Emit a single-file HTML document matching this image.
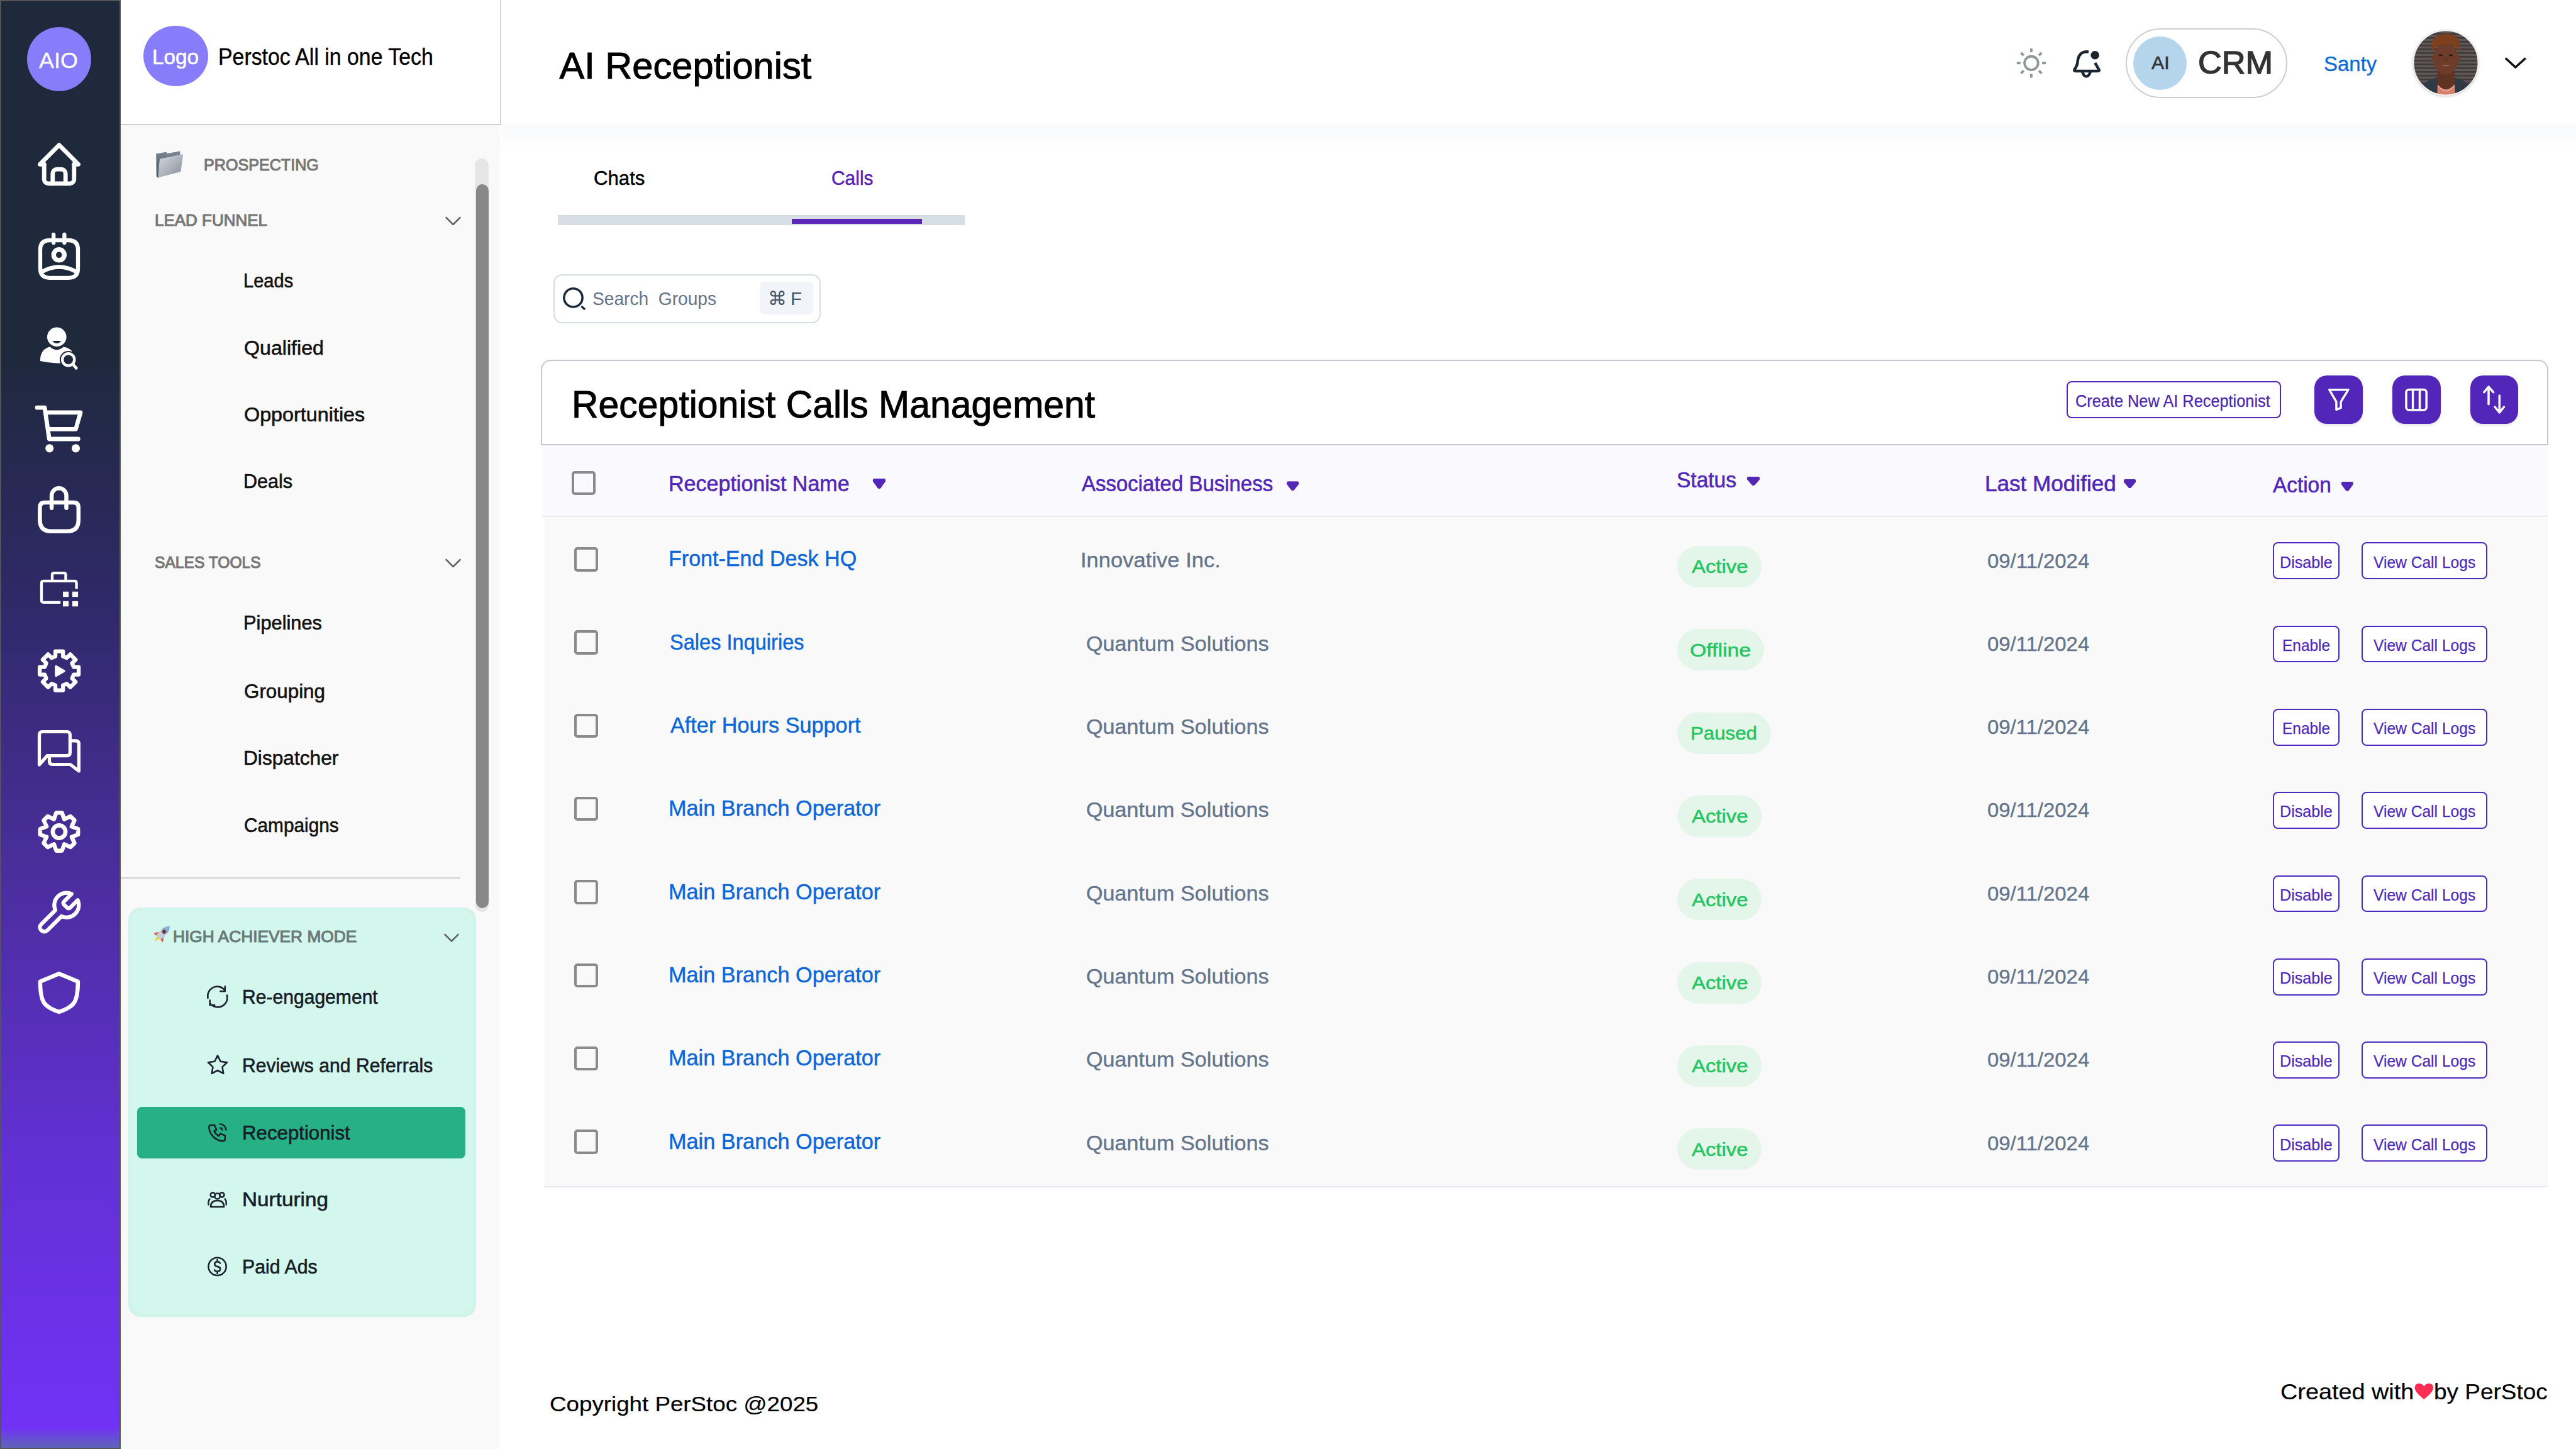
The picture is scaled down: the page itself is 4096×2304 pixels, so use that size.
<!DOCTYPE html>
<html><head><meta charset="utf-8"><title>AI Receptionist</title>
<style>
html,body{margin:0;padding:0;}
body{width:4096px;height:2304px;position:relative;overflow:hidden;background:#fff;font-family:"Liberation Sans",sans-serif;}
body>div,body>span{position:absolute;}
.t{white-space:pre;line-height:1;}
svg{position:absolute;left:0;top:0;}
</style></head><body>
<div style="left:0.0px;top:0.0px;width:192.0px;height:2304.0px;box-sizing:border-box;border:2px solid #555;background:linear-gradient(180deg,#1e293b 0%,#1e293b 24%,#30296a 42%,#4a2e9c 60%,#6230d4 80%,#7132f5 98.6%,#5d66b8 100%);"></div>
<div style="left:192.0px;top:0.0px;width:603.0px;height:2304.0px;background:#f9f9f9;"></div>
<div style="left:192.0px;top:0.0px;width:605.0px;height:199.0px;box-sizing:border-box;background:#fff;border-right:2px solid #d6d6d6;border-bottom:2px solid #d0d0d0;"></div>
<div style="left:797.0px;top:197.0px;width:3299.0px;height:45.0px;background:linear-gradient(180deg,#f9fafd,#ffffff);"></div>
<div style="left:797.0px;top:0.0px;width:3299.0px;height:197.0px;background:#fff;"></div>
<div style="left:43.0px;top:43.0px;width:102.0px;height:102.0px;border-radius:50%;background:#877cf9;"></div>
<span class="t" style="left:61.9px;top:78.5px;font-size:34.22px;color:#fff;transform:scaleX(1.0484);transform-origin:0 0;-webkit-text-stroke:0.3px #fff;">AIO</span>
<div style="left:228.3px;top:40.7px;width:102.4px;height:96.4px;border-radius:50%;background:#877cf9;"></div>
<span class="t" style="left:242.2px;top:74.3px;font-size:33.94px;color:#fff;transform:scaleX(0.9822);transform-origin:0 0;-webkit-text-stroke:0.6px #fff;">Logo</span>
<span class="t" style="left:347.2px;top:73.0px;font-size:36.31px;color:#000;transform:scaleX(0.9325);transform-origin:0 0;-webkit-text-stroke:0.4px #000;">Perstoc All in one Tech</span>
<div style="left:755.0px;top:252.0px;width:22.0px;height:1198.0px;border-radius:11px;background:#e6e6e6;"></div>
<div style="left:757.0px;top:293.0px;width:20.0px;height:1151.0px;border-radius:10px;background:#888;"></div>
<span class="t" style="left:324.2px;top:249.0px;font-size:26.12px;color:#777;transform:scaleX(0.9621);transform-origin:0 0;-webkit-text-stroke:1.1px #777;">PROSPECTING</span>
<span class="t" style="left:245.5px;top:336.7px;font-size:26.12px;color:#777;transform:scaleX(0.9947);transform-origin:0 0;-webkit-text-stroke:1.1px #777;">LEAD FUNNEL</span>
<span class="t" style="left:245.7px;top:880.8px;font-size:26.12px;color:#777;transform:scaleX(0.9424);transform-origin:0 0;-webkit-text-stroke:1.1px #777;">SALES TOOLS</span>
<span class="t" style="left:386.8px;top:430.9px;font-size:31.28px;color:#111;transform:scaleX(0.9292);transform-origin:0 0;-webkit-text-stroke:0.6px #111;">Leads</span>
<span class="t" style="left:387.7px;top:537.7px;font-size:31.28px;color:#111;transform:scaleX(1.0285);transform-origin:0 0;-webkit-text-stroke:0.6px #111;">Qualified</span>
<span class="t" style="left:387.7px;top:644.0px;font-size:31.28px;color:#111;transform:scaleX(1.0339);transform-origin:0 0;-webkit-text-stroke:0.6px #111;">Opportunities</span>
<span class="t" style="left:386.7px;top:750.0px;font-size:31.28px;color:#111;transform:scaleX(0.9773);transform-origin:0 0;-webkit-text-stroke:0.6px #111;">Deals</span>
<span class="t" style="left:386.7px;top:975.0px;font-size:31.28px;color:#111;transform:scaleX(0.9849);transform-origin:0 0;-webkit-text-stroke:0.6px #111;">Pipelines</span>
<span class="t" style="left:387.6px;top:1084.0px;font-size:31.28px;color:#111;transform:scaleX(1.0029);transform-origin:0 0;-webkit-text-stroke:0.6px #111;">Grouping</span>
<span class="t" style="left:386.6px;top:1190.3px;font-size:31.28px;color:#111;transform:scaleX(1.0123);transform-origin:0 0;-webkit-text-stroke:0.6px #111;">Dispatcher</span>
<span class="t" style="left:387.7px;top:1297.0px;font-size:31.28px;color:#111;transform:scaleX(0.9533);transform-origin:0 0;-webkit-text-stroke:0.6px #111;">Campaigns</span>
<div style="left:192.0px;top:1395.0px;width:540.0px;height:2.0px;background:#cfcfcf;"></div>
<div style="left:204.0px;top:1443.0px;width:553.0px;height:651.0px;border-radius:20px;background:#d4f7ed;box-shadow:inset 0 0 8px rgba(0,90,60,0.06);"></div>
<div style="left:218.0px;top:1760.0px;width:522.0px;height:82.0px;border-radius:8px;background:#27b084;"></div>
<span class="t" style="left:275.0px;top:1476.0px;font-size:25.98px;color:#6b7b77;transform:scaleX(1.0129);transform-origin:0 0;-webkit-text-stroke:1.1px #6b7b77;">HIGH ACHIEVER MODE</span>
<span class="t" style="left:385.0px;top:1570.0px;font-size:31.01px;color:#161d28;transform:scaleX(0.9704);transform-origin:0 0;-webkit-text-stroke:0.6px #161d28;">Re-engagement</span>
<span class="t" style="left:385.0px;top:1678.7px;font-size:31.01px;color:#161d28;transform:scaleX(0.9725);transform-origin:0 0;-webkit-text-stroke:0.6px #161d28;">Reviews and Referrals</span>
<span class="t" style="left:384.9px;top:1785.6px;font-size:31.01px;color:#161d28;transform:scaleX(1.0070);transform-origin:0 0;-webkit-text-stroke:0.6px #161d28;">Receptionist</span>
<span class="t" style="left:384.8px;top:1891.9px;font-size:31.01px;color:#161d28;transform:scaleX(1.0747);transform-origin:0 0;-webkit-text-stroke:0.6px #161d28;">Nurturing</span>
<span class="t" style="left:385.0px;top:1998.7px;font-size:31.01px;color:#161d28;transform:scaleX(0.9777);transform-origin:0 0;-webkit-text-stroke:0.6px #161d28;">Paid Ads</span>
<span class="t" style="left:889.4px;top:75.4px;font-size:59.64px;color:#000;-webkit-text-stroke:1.0px #000;">AI Receptionist</span>
<div style="left:3380.0px;top:45.0px;width:257.0px;height:111.0px;box-sizing:border-box;border:2px solid #cfcfcf;border-radius:56px;background:#fff;"></div>
<div style="left:3392.0px;top:58.0px;width:85.0px;height:85.0px;border-radius:50%;background:#b4d5ec;"></div>
<span class="t" style="left:3420.8px;top:85.8px;font-size:29.19px;color:#333;transform:scaleX(1.0358);transform-origin:0 0;-webkit-text-stroke:0.6px #333;">AI</span>
<span class="t" style="left:3495.4px;top:75.2px;font-size:49.44px;color:#333;transform:scaleX(1.0570);transform-origin:0 0;-webkit-text-stroke:1.4px #333;">CRM</span>
<span class="t" style="left:3694.5px;top:84.5px;font-size:33.24px;color:#0b6bd6;transform:scaleX(0.9912);transform-origin:0 0;-webkit-text-stroke:0.3px #0b6bd6;">Santy</span>
<div style="left:3837.0px;top:48.0px;width:104.0px;height:104.0px;border-radius:50%;background:radial-gradient(circle at 50% 45%,#6b4a3a 0%,#4a3a33 35%,#5a5450 60%,#3d3835 100%);box-shadow:0 1px 4px rgba(0,0,0,0.25);"></div>
<span class="t" style="left:944.0px;top:267.9px;font-size:31.15px;color:#000;-webkit-text-stroke:0.5px #000;">Chats</span>
<span class="t" style="left:1321.5px;top:267.9px;font-size:31.15px;color:#5b21b6;transform:scaleX(0.9614);transform-origin:0 0;-webkit-text-stroke:0.5px #5b21b6;">Calls</span>
<div style="left:887.0px;top:341.5px;width:647.0px;height:16.5px;background:#d8dee6;"></div>
<div style="left:1258.6px;top:347.7px;width:207.4px;height:8.3px;background:#5b27b8;"></div>
<div style="left:880.0px;top:436.0px;width:425.0px;height:78.0px;box-sizing:border-box;border:2px solid #d5dde6;border-radius:14px;background:#fff;"></div>
<div style="left:1208.0px;top:448.0px;width:85.0px;height:52.0px;border-radius:8px;background:#f1f5f9;"></div>
<span class="t" style="left:942.4px;top:460.0px;font-size:29.75px;color:#64748b;transform:scaleX(0.9459);transform-origin:0 0;white-space:pre;">Search  Groups</span>
<span class="t" style="left:1221.0px;top:460.0px;font-size:29.75px;color:#475569;">⌘</span>
<span class="t" style="left:1257.0px;top:460.0px;font-size:29.75px;color:#475569;">F</span>
<div style="left:860.0px;top:572.0px;width:3191.5px;height:136.0px;box-sizing:border-box;border:2px solid #c6c6ce;border-bottom:2px solid #c6c6ce;border-radius:16px 16px 0 0;background:#fff;"></div>
<div style="left:862.0px;top:708.0px;width:3189.0px;height:114.0px;box-sizing:border-box;background:#f9f9fe;border-bottom:2px solid #e8ebf0;"></div>
<div style="left:866.0px;top:822.0px;width:3185.0px;height:1066.0px;box-sizing:border-box;background:#f9f9fa;border-bottom:2px solid #e5e8ee;"></div>
<span class="t" style="left:909.1px;top:612.0px;font-size:61.45px;color:#000;transform:scaleX(0.9594);transform-origin:0 0;-webkit-text-stroke:1.0px #000;">Receptionist Calls Management</span>
<div style="left:3285.5px;top:606.0px;width:341.0px;height:59.0px;box-sizing:border-box;border:2px solid #5427b8;border-radius:8px;background:#fff;"></div>
<span class="t" style="left:3300.3px;top:624.0px;font-size:27.93px;color:#4a25b0;transform:scaleX(0.9072);transform-origin:0 0;-webkit-text-stroke:0.25px #4a25b0;">Create New AI Receptionist</span>
<div style="left:3680.0px;top:597.0px;width:76.5px;height:76.5px;border-radius:20px;background:#5126b8;box-shadow:0 2px 4px rgba(0,0,0,0.12);"></div>
<div style="left:3804.0px;top:597.0px;width:76.5px;height:76.5px;border-radius:20px;background:#5126b8;box-shadow:0 2px 4px rgba(0,0,0,0.12);"></div>
<div style="left:3927.5px;top:597.0px;width:76.5px;height:76.5px;border-radius:20px;background:#5126b8;box-shadow:0 2px 4px rgba(0,0,0,0.12);"></div>
<div style="left:909.0px;top:749.0px;width:38.0px;height:38.0px;box-sizing:border-box;border:4px solid #8a8a8a;border-radius:5px;"></div>
<span class="t" style="left:1062.6px;top:751.3px;font-size:35.34px;color:#5227b8;transform:scaleX(0.9637);transform-origin:0 0;-webkit-text-stroke:0.6px #5227b8;">Receptionist Name</span>
<span class="t" style="left:1719.9px;top:751.0px;font-size:35.34px;color:#5227b8;transform:scaleX(0.9331);transform-origin:0 0;-webkit-text-stroke:0.6px #5227b8;">Associated Business</span>
<span class="t" style="left:2666.2px;top:745.5px;font-size:34.64px;color:#5227b8;transform:scaleX(0.9673);transform-origin:0 0;-webkit-text-stroke:0.6px #5227b8;">Status</span>
<span class="t" style="left:3155.8px;top:751.0px;font-size:35.34px;color:#5227b8;transform:scaleX(0.9935);transform-origin:0 0;-webkit-text-stroke:0.6px #5227b8;">Last Modified</span>
<span class="t" style="left:3614.4px;top:754.3px;font-size:34.36px;color:#5227b8;transform:scaleX(0.9711);transform-origin:0 0;-webkit-text-stroke:0.6px #5227b8;">Action</span>
<div style="left:913.0px;top:870.0px;width:38.3px;height:38.5px;box-sizing:border-box;border:4px solid #8a8a8a;border-radius:5px;"></div>
<span class="t" style="left:1063.2px;top:871.4px;font-size:34.92px;color:#0b66d8;transform:scaleX(0.9761);transform-origin:0 0;-webkit-text-stroke:0.45px #0b66d8;">Front-End Desk HQ</span>
<span class="t" style="left:1717.8px;top:873.4px;font-size:34.08px;color:#64748b;transform:scaleX(1.0145);transform-origin:0 0;-webkit-text-stroke:0.35px #64748b;">Innovative Inc.</span>
<div style="left:2667.0px;top:868.0px;width:134.3px;height:66.0px;border-radius:33px;background:#e4f5ea;"></div>
<span class="t" style="left:2689.9px;top:886.4px;font-size:30.17px;color:#22c55e;transform:scaleX(1.0895);transform-origin:0 0;-webkit-text-stroke:0.5px #22c55e;">Active</span>
<span class="t" style="left:3159.7px;top:876.5px;font-size:30.45px;color:#64748b;transform:scaleX(1.0807);transform-origin:0 0;-webkit-text-stroke:0.35px #64748b;">09/11/2024</span>
<div style="left:3614.2px;top:862.3px;width:106.0px;height:58.9px;box-sizing:border-box;border:2px solid #4c2ac0;border-radius:8px;background:#fff;"></div>
<span class="t" style="left:3625.3px;top:880.5px;font-size:25.98px;color:#4c2ac0;transform:scaleX(0.9666);transform-origin:0 0;-webkit-text-stroke:0.25px #4c2ac0;">Disable</span>
<div style="left:3755.2px;top:862.3px;width:199.6px;height:58.9px;box-sizing:border-box;border:2px solid #4c2ac0;border-radius:8px;background:#fff;"></div>
<span class="t" style="left:3773.9px;top:880.5px;font-size:25.98px;color:#4c2ac0;transform:scaleX(0.9469);transform-origin:0 0;-webkit-text-stroke:0.25px #4c2ac0;">View Call Logs</span>
<div style="left:913.0px;top:1002.3px;width:38.3px;height:38.5px;box-sizing:border-box;border:4px solid #8a8a8a;border-radius:5px;"></div>
<span class="t" style="left:1064.5px;top:1003.8px;font-size:34.92px;color:#0b66d8;transform:scaleX(0.9326);transform-origin:0 0;-webkit-text-stroke:0.45px #0b66d8;">Sales Inquiries</span>
<span class="t" style="left:1727.3px;top:1005.7px;font-size:34.08px;color:#64748b;transform:scaleX(1.0027);transform-origin:0 0;-webkit-text-stroke:0.35px #64748b;">Quantum Solutions</span>
<div style="left:2666.5px;top:1000.3px;width:138.3px;height:66.0px;border-radius:33px;background:#e4f5ea;"></div>
<span class="t" style="left:2687.2px;top:1018.7px;font-size:30.17px;color:#22c55e;transform:scaleX(1.1220);transform-origin:0 0;-webkit-text-stroke:0.5px #22c55e;">Offline</span>
<span class="t" style="left:3159.7px;top:1008.8px;font-size:30.45px;color:#64748b;transform:scaleX(1.0807);transform-origin:0 0;-webkit-text-stroke:0.35px #64748b;">09/11/2024</span>
<div style="left:3614.2px;top:994.6px;width:106.0px;height:58.9px;box-sizing:border-box;border:2px solid #4c2ac0;border-radius:8px;background:#fff;"></div>
<span class="t" style="left:3629.0px;top:1012.8px;font-size:25.98px;color:#4c2ac0;transform:scaleX(0.9406);transform-origin:0 0;-webkit-text-stroke:0.25px #4c2ac0;">Enable</span>
<div style="left:3755.2px;top:994.6px;width:199.6px;height:58.9px;box-sizing:border-box;border:2px solid #4c2ac0;border-radius:8px;background:#fff;"></div>
<span class="t" style="left:3773.9px;top:1012.8px;font-size:25.98px;color:#4c2ac0;transform:scaleX(0.9469);transform-origin:0 0;-webkit-text-stroke:0.25px #4c2ac0;">View Call Logs</span>
<div style="left:913.0px;top:1134.6px;width:38.3px;height:38.5px;box-sizing:border-box;border:4px solid #8a8a8a;border-radius:5px;"></div>
<span class="t" style="left:1065.9px;top:1136.1px;font-size:34.92px;color:#0b66d8;transform:scaleX(0.9808);transform-origin:0 0;-webkit-text-stroke:0.45px #0b66d8;">After Hours Support</span>
<span class="t" style="left:1727.3px;top:1138.0px;font-size:34.08px;color:#64748b;transform:scaleX(1.0027);transform-origin:0 0;-webkit-text-stroke:0.35px #64748b;">Quantum Solutions</span>
<div style="left:2666.9px;top:1132.6px;width:149.2px;height:66.0px;border-radius:33px;background:#e4f5ea;"></div>
<span class="t" style="left:2688.2px;top:1151.0px;font-size:30.17px;color:#22c55e;transform:scaleX(1.0348);transform-origin:0 0;-webkit-text-stroke:0.5px #22c55e;">Paused</span>
<span class="t" style="left:3159.7px;top:1141.1px;font-size:30.45px;color:#64748b;transform:scaleX(1.0807);transform-origin:0 0;-webkit-text-stroke:0.35px #64748b;">09/11/2024</span>
<div style="left:3614.2px;top:1126.9px;width:106.0px;height:58.9px;box-sizing:border-box;border:2px solid #4c2ac0;border-radius:8px;background:#fff;"></div>
<span class="t" style="left:3629.0px;top:1145.1px;font-size:25.98px;color:#4c2ac0;transform:scaleX(0.9406);transform-origin:0 0;-webkit-text-stroke:0.25px #4c2ac0;">Enable</span>
<div style="left:3755.2px;top:1126.9px;width:199.6px;height:58.9px;box-sizing:border-box;border:2px solid #4c2ac0;border-radius:8px;background:#fff;"></div>
<span class="t" style="left:3773.9px;top:1145.1px;font-size:25.98px;color:#4c2ac0;transform:scaleX(0.9469);transform-origin:0 0;-webkit-text-stroke:0.25px #4c2ac0;">View Call Logs</span>
<div style="left:913.0px;top:1266.9px;width:38.3px;height:38.5px;box-sizing:border-box;border:4px solid #8a8a8a;border-radius:5px;"></div>
<span class="t" style="left:1063.2px;top:1268.4px;font-size:34.92px;color:#0b66d8;transform:scaleX(0.9821);transform-origin:0 0;-webkit-text-stroke:0.45px #0b66d8;">Main Branch Operator</span>
<span class="t" style="left:1727.3px;top:1270.3px;font-size:34.08px;color:#64748b;transform:scaleX(1.0027);transform-origin:0 0;-webkit-text-stroke:0.35px #64748b;">Quantum Solutions</span>
<div style="left:2667.0px;top:1264.9px;width:134.3px;height:66.0px;border-radius:33px;background:#e4f5ea;"></div>
<span class="t" style="left:2689.9px;top:1283.3px;font-size:30.17px;color:#22c55e;transform:scaleX(1.0895);transform-origin:0 0;-webkit-text-stroke:0.5px #22c55e;">Active</span>
<span class="t" style="left:3159.7px;top:1273.4px;font-size:30.45px;color:#64748b;transform:scaleX(1.0807);transform-origin:0 0;-webkit-text-stroke:0.35px #64748b;">09/11/2024</span>
<div style="left:3614.2px;top:1259.2px;width:106.0px;height:58.9px;box-sizing:border-box;border:2px solid #4c2ac0;border-radius:8px;background:#fff;"></div>
<span class="t" style="left:3625.3px;top:1277.4px;font-size:25.98px;color:#4c2ac0;transform:scaleX(0.9666);transform-origin:0 0;-webkit-text-stroke:0.25px #4c2ac0;">Disable</span>
<div style="left:3755.2px;top:1259.2px;width:199.6px;height:58.9px;box-sizing:border-box;border:2px solid #4c2ac0;border-radius:8px;background:#fff;"></div>
<span class="t" style="left:3773.9px;top:1277.4px;font-size:25.98px;color:#4c2ac0;transform:scaleX(0.9469);transform-origin:0 0;-webkit-text-stroke:0.25px #4c2ac0;">View Call Logs</span>
<div style="left:913.0px;top:1399.2px;width:38.3px;height:38.5px;box-sizing:border-box;border:4px solid #8a8a8a;border-radius:5px;"></div>
<span class="t" style="left:1063.2px;top:1400.6px;font-size:34.92px;color:#0b66d8;transform:scaleX(0.9821);transform-origin:0 0;-webkit-text-stroke:0.45px #0b66d8;">Main Branch Operator</span>
<span class="t" style="left:1727.3px;top:1402.6px;font-size:34.08px;color:#64748b;transform:scaleX(1.0027);transform-origin:0 0;-webkit-text-stroke:0.35px #64748b;">Quantum Solutions</span>
<div style="left:2667.0px;top:1397.2px;width:134.3px;height:66.0px;border-radius:33px;background:#e4f5ea;"></div>
<span class="t" style="left:2689.9px;top:1415.6px;font-size:30.17px;color:#22c55e;transform:scaleX(1.0895);transform-origin:0 0;-webkit-text-stroke:0.5px #22c55e;">Active</span>
<span class="t" style="left:3159.7px;top:1405.7px;font-size:30.45px;color:#64748b;transform:scaleX(1.0807);transform-origin:0 0;-webkit-text-stroke:0.35px #64748b;">09/11/2024</span>
<div style="left:3614.2px;top:1391.5px;width:106.0px;height:58.9px;box-sizing:border-box;border:2px solid #4c2ac0;border-radius:8px;background:#fff;"></div>
<span class="t" style="left:3625.3px;top:1409.7px;font-size:25.98px;color:#4c2ac0;transform:scaleX(0.9666);transform-origin:0 0;-webkit-text-stroke:0.25px #4c2ac0;">Disable</span>
<div style="left:3755.2px;top:1391.5px;width:199.6px;height:58.9px;box-sizing:border-box;border:2px solid #4c2ac0;border-radius:8px;background:#fff;"></div>
<span class="t" style="left:3773.9px;top:1409.7px;font-size:25.98px;color:#4c2ac0;transform:scaleX(0.9469);transform-origin:0 0;-webkit-text-stroke:0.25px #4c2ac0;">View Call Logs</span>
<div style="left:913.0px;top:1531.5px;width:38.3px;height:38.5px;box-sizing:border-box;border:4px solid #8a8a8a;border-radius:5px;"></div>
<span class="t" style="left:1063.2px;top:1532.9px;font-size:34.92px;color:#0b66d8;transform:scaleX(0.9821);transform-origin:0 0;-webkit-text-stroke:0.45px #0b66d8;">Main Branch Operator</span>
<span class="t" style="left:1727.3px;top:1534.9px;font-size:34.08px;color:#64748b;transform:scaleX(1.0027);transform-origin:0 0;-webkit-text-stroke:0.35px #64748b;">Quantum Solutions</span>
<div style="left:2667.0px;top:1529.5px;width:134.3px;height:66.0px;border-radius:33px;background:#e4f5ea;"></div>
<span class="t" style="left:2689.9px;top:1547.9px;font-size:30.17px;color:#22c55e;transform:scaleX(1.0895);transform-origin:0 0;-webkit-text-stroke:0.5px #22c55e;">Active</span>
<span class="t" style="left:3159.7px;top:1538.0px;font-size:30.45px;color:#64748b;transform:scaleX(1.0807);transform-origin:0 0;-webkit-text-stroke:0.35px #64748b;">09/11/2024</span>
<div style="left:3614.2px;top:1523.8px;width:106.0px;height:58.9px;box-sizing:border-box;border:2px solid #4c2ac0;border-radius:8px;background:#fff;"></div>
<span class="t" style="left:3625.3px;top:1542.0px;font-size:25.98px;color:#4c2ac0;transform:scaleX(0.9666);transform-origin:0 0;-webkit-text-stroke:0.25px #4c2ac0;">Disable</span>
<div style="left:3755.2px;top:1523.8px;width:199.6px;height:58.9px;box-sizing:border-box;border:2px solid #4c2ac0;border-radius:8px;background:#fff;"></div>
<span class="t" style="left:3773.9px;top:1542.0px;font-size:25.98px;color:#4c2ac0;transform:scaleX(0.9469);transform-origin:0 0;-webkit-text-stroke:0.25px #4c2ac0;">View Call Logs</span>
<div style="left:913.0px;top:1663.8px;width:38.3px;height:38.5px;box-sizing:border-box;border:4px solid #8a8a8a;border-radius:5px;"></div>
<span class="t" style="left:1063.2px;top:1665.3px;font-size:34.92px;color:#0b66d8;transform:scaleX(0.9821);transform-origin:0 0;-webkit-text-stroke:0.45px #0b66d8;">Main Branch Operator</span>
<span class="t" style="left:1727.3px;top:1667.2px;font-size:34.08px;color:#64748b;transform:scaleX(1.0027);transform-origin:0 0;-webkit-text-stroke:0.35px #64748b;">Quantum Solutions</span>
<div style="left:2667.0px;top:1661.8px;width:134.3px;height:66.0px;border-radius:33px;background:#e4f5ea;"></div>
<span class="t" style="left:2689.9px;top:1680.2px;font-size:30.17px;color:#22c55e;transform:scaleX(1.0895);transform-origin:0 0;-webkit-text-stroke:0.5px #22c55e;">Active</span>
<span class="t" style="left:3159.7px;top:1670.3px;font-size:30.45px;color:#64748b;transform:scaleX(1.0807);transform-origin:0 0;-webkit-text-stroke:0.35px #64748b;">09/11/2024</span>
<div style="left:3614.2px;top:1656.1px;width:106.0px;height:58.9px;box-sizing:border-box;border:2px solid #4c2ac0;border-radius:8px;background:#fff;"></div>
<span class="t" style="left:3625.3px;top:1674.3px;font-size:25.98px;color:#4c2ac0;transform:scaleX(0.9666);transform-origin:0 0;-webkit-text-stroke:0.25px #4c2ac0;">Disable</span>
<div style="left:3755.2px;top:1656.1px;width:199.6px;height:58.9px;box-sizing:border-box;border:2px solid #4c2ac0;border-radius:8px;background:#fff;"></div>
<span class="t" style="left:3773.9px;top:1674.3px;font-size:25.98px;color:#4c2ac0;transform:scaleX(0.9469);transform-origin:0 0;-webkit-text-stroke:0.25px #4c2ac0;">View Call Logs</span>
<div style="left:913.0px;top:1796.1px;width:38.3px;height:38.5px;box-sizing:border-box;border:4px solid #8a8a8a;border-radius:5px;"></div>
<span class="t" style="left:1063.2px;top:1797.6px;font-size:34.92px;color:#0b66d8;transform:scaleX(0.9821);transform-origin:0 0;-webkit-text-stroke:0.45px #0b66d8;">Main Branch Operator</span>
<span class="t" style="left:1727.3px;top:1799.5px;font-size:34.08px;color:#64748b;transform:scaleX(1.0027);transform-origin:0 0;-webkit-text-stroke:0.35px #64748b;">Quantum Solutions</span>
<div style="left:2667.0px;top:1794.1px;width:134.3px;height:66.0px;border-radius:33px;background:#e4f5ea;"></div>
<span class="t" style="left:2689.9px;top:1812.5px;font-size:30.17px;color:#22c55e;transform:scaleX(1.0895);transform-origin:0 0;-webkit-text-stroke:0.5px #22c55e;">Active</span>
<span class="t" style="left:3159.7px;top:1802.6px;font-size:30.45px;color:#64748b;transform:scaleX(1.0807);transform-origin:0 0;-webkit-text-stroke:0.35px #64748b;">09/11/2024</span>
<div style="left:3614.2px;top:1788.4px;width:106.0px;height:58.9px;box-sizing:border-box;border:2px solid #4c2ac0;border-radius:8px;background:#fff;"></div>
<span class="t" style="left:3625.3px;top:1806.6px;font-size:25.98px;color:#4c2ac0;transform:scaleX(0.9666);transform-origin:0 0;-webkit-text-stroke:0.25px #4c2ac0;">Disable</span>
<div style="left:3755.2px;top:1788.4px;width:199.6px;height:58.9px;box-sizing:border-box;border:2px solid #4c2ac0;border-radius:8px;background:#fff;"></div>
<span class="t" style="left:3773.9px;top:1806.6px;font-size:25.98px;color:#4c2ac0;transform:scaleX(0.9469);transform-origin:0 0;-webkit-text-stroke:0.25px #4c2ac0;">View Call Logs</span>
<span class="t" style="left:874.2px;top:2216.0px;font-size:33.94px;color:#000;transform:scaleX(1.0829);transform-origin:0 0;-webkit-text-stroke:0.2px #000;">Copyright PerStoc @2025</span>
<span class="t" style="left:3626.1px;top:2195.8px;font-size:34.36px;color:#000;transform:scaleX(1.1007);transform-origin:0 0;-webkit-text-stroke:0.2px #000;">Created with</span>
<span class="t" style="left:3869.6px;top:2195.8px;font-size:34.36px;color:#000;transform:scaleX(1.0750);transform-origin:0 0;-webkit-text-stroke:0.2px #000;">by PerStoc</span>
<svg width="4096" height="2304" viewBox="0 0 4096 2304" fill="none" stroke-linecap="round" stroke-linejoin="round">
<path d="M1388.5 762.5Q1388.5 761.5 1390 761.5H1406Q1407.5 761.5 1407.5 762.5V765.5L1399.6 776.5H1396.4L1388.5 765.5Z" fill="#5227b8" stroke="#5227b8" stroke-width="1" stroke-linejoin="round"/>
<path d="M2046.5 766.9Q2046.5 765.9 2048 765.9H2063Q2064.5 765.9 2064.5 766.9V769.9L2057.1 779.5H2053.9L2046.5 769.9Z" fill="#5227b8" stroke="#5227b8" stroke-width="1" stroke-linejoin="round"/>
<path d="M2778.5 759.5Q2778.5 758.5 2780 758.5H2796Q2797.5 758.5 2797.5 759.5V762.5L2789.6 771.5H2786.4L2778.5 762.5Z" fill="#5227b8" stroke="#5227b8" stroke-width="1" stroke-linejoin="round"/>
<path d="M3377.5 763.5Q3377.5 762.5 3379 762.5H3394Q3395.5 762.5 3395.5 763.5V766.5L3388.1 775.5H3384.9L3377.5 766.5Z" fill="#5227b8" stroke="#5227b8" stroke-width="1" stroke-linejoin="round"/>
<path d="M3723.5 767.5Q3723.5 766.5 3725 766.5H3739.6Q3741.1 766.5 3741.1 767.5V770.5L3733.9 780.2H3730.7000000000003L3723.5 770.5Z" fill="#5227b8" stroke="#5227b8" stroke-width="1" stroke-linejoin="round"/>
<g transform="translate(53.2 220.5) scale(3.4)" stroke="#fff" stroke-width="2"><path d="M5 12l-2 0l9 -9l9 9l-2 0"/><path d="M5 12v7a2 2 0 0 0 2 2h10a2 2 0 0 0 2 -2v-7"/><path d="M9 21v-4.7a2 2 0 0 1 2 -2h2a2 2 0 0 1 2 2v4.7"/></g>
<path d="M79 382H109Q124 382 124 397V426.8Q124 441.8 109 441.8H79Q64 441.8 64 426.8V397Q64 382 79 382Z" stroke="#fff" stroke-width="6.3" fill="none" />
<path d="M85.2 373V386M102.4 373V386" stroke="#fff" stroke-width="6.3" fill="none" />
<circle cx="93.8" cy="405.3" r="8.5" stroke="#fff" stroke-width="7.4" fill="none" />
<path d="M65 433Q94 416 123 433" stroke="#fff" stroke-width="6.3" fill="none" />
<circle cx="90.3" cy="535.7" r="15.3" stroke="none" stroke-width="0" fill="#fff" />
<path d="M83 542Q90.3 550 97.6 542Z" stroke="none" stroke-width="0" fill="#1e293b" />
<path d="M64 572C64 560 71 553 79.5 551.5Q90 561 101 551.5C107 552.5 112 555 115 559L113 578C95 578 76 577 64 574Z" stroke="none" stroke-width="0" fill="#fff" />
<circle cx="108.7" cy="571.8" r="13.8" stroke="none" stroke-width="0" fill="#1e293b" />
<circle cx="108.7" cy="571.8" r="9.6" stroke="#fff" stroke-width="4.4" fill="none" />
<path d="M115.5 578.8L122.5 586.8" stroke="#fff" stroke-width="4.6" fill="none" stroke-linecap="butt"/>
<path d="M59 648.2H71.1L78.3 698H124.3" stroke="#fff" stroke-width="6.8" fill="none" />
<path d="M73.4 655.8H128L120.5 682.4H78.3" stroke="#fff" stroke-width="6.8" fill="none" />
<circle cx="78.7" cy="712.8" r="6.6" stroke="none" stroke-width="0" fill="#fff" />
<circle cx="120.5" cy="712.8" r="6.6" stroke="none" stroke-width="0" fill="#fff" />
<path d="M71.4 799H116.8Q124.8 799 124.8 807V826.7Q124.8 844.7 106.8 844.7H81.4Q63.4 844.7 63.4 826.7V807Q63.4 799 71.4 799Z" stroke="#fff" stroke-width="6.5" fill="none" />
<path d="M82.1 807.8V788A11.7 11.7 0 0 1 105.5 788V807.8" stroke="#fff" stroke-width="6.5" fill="none" />
<path d="M121.6 936.2V926.9Q121.6 923.9 118.6 923.9H69Q66 923.9 66 926.9V954.8Q66 957.8 69 957.8H96.2" stroke="#fff" stroke-width="4.3" fill="none" stroke-linecap="butt"/>
<path d="M83 923.9V914Q83 911.1 86 911.1H101.5Q104.5 911.1 104.5 914V923.9" stroke="#fff" stroke-width="4.3" fill="none" />
<rect x="100" y="940.7" width="9.1" height="8.4" fill="#fff"/>
<rect x="115" y="940.7" width="9.1" height="8.4" fill="#fff"/>
<rect x="100" y="955.9" width="9.1" height="8.4" fill="#fff"/>
<rect x="115" y="955.9" width="9.1" height="8.4" fill="#fff"/>
<path d="M88.10 1043.60L88.10 1035.60L100.10 1035.60L100.10 1043.60L106.12 1046.09L111.78 1040.44L120.26 1048.92L114.61 1054.58L117.10 1060.60L125.10 1060.60L125.10 1072.60L117.10 1072.60L114.61 1078.62L120.26 1084.28L111.78 1092.76L106.12 1087.11L100.10 1089.60L100.10 1097.60L88.10 1097.60L88.10 1089.60L82.08 1087.11L76.42 1092.76L67.94 1084.28L73.59 1078.62L71.10 1072.60L63.10 1072.60L63.10 1060.60L71.10 1060.60L73.59 1054.58L67.94 1048.92L76.42 1040.44L82.08 1046.09Z" stroke="#fff" stroke-width="6.3" fill="none" />
<path d="M89 1059.5L89 1074.5L102 1067Z" stroke="#fff" stroke-width="3.5" fill="#fff" />
<path d="M75 1201.7L62.5 1216V1168.5Q62.5 1163.5 67.5 1163.5H106.4Q111.4 1163.5 111.4 1168.5V1196.7Q111.4 1201.7 106.4 1201.7Z" stroke="#fff" stroke-width="5.2" fill="none" />
<path d="M78.5 1201.7V1210.5Q78.5 1215.5 83.5 1215.5H111.8L125.4 1226V1182.8Q125.4 1177.8 120.4 1177.8H111.4" stroke="#fff" stroke-width="5.2" fill="none" />
<path d="M89.49 1292.34L98.51 1292.34L102.23 1302.64L112.14 1297.98L118.52 1304.36L113.86 1314.27L124.16 1317.99L124.16 1327.01L113.86 1330.73L118.52 1340.64L112.14 1347.02L102.23 1342.36L98.51 1352.66L89.49 1352.66L85.77 1342.36L75.86 1347.02L69.48 1340.64L74.14 1330.73L63.84 1327.01L63.84 1317.99L74.14 1314.27L69.48 1304.36L75.86 1297.98L85.77 1302.64Z" stroke="#fff" stroke-width="6.5" fill="none" />
<circle cx="94" cy="1322.5" r="10.1" stroke="#fff" stroke-width="6.7" fill="none" />
<g transform="translate(53.8 1413.2) scale(3.25)" stroke="#fff" stroke-width="1.9"><path d="M14.7 6.3a1 1 0 0 0 0 1.4l1.6 1.6a1 1 0 0 0 1.4 0l3.77-3.77a6 6 0 0 1-7.94 7.94l-6.91 6.91a2.12 2.12 0 0 1-3-3l6.91-6.91a6 6 0 0 1 7.94-7.94l-3.76 3.76z"/></g>
<path d="M93.9 1548.2L63.9 1560.8C64 1595 70 1600 93.9 1609C117.8 1600 123.8 1595 123.9 1560.8Z" stroke="#fff" stroke-width="6.5" fill="none" />
<path d="M330.5 1587A15.3 15.3 0 0 1 357.5 1574.5M357.8 1568.5V1576.3H350.3M361 1582.5A15.3 15.3 0 0 1 334 1595.5M333.7 1590.5V1598.2H341.2" stroke="#1b2430" stroke-width="2.6" fill="none" />
<g transform="translate(328 1675.4) scale(1.5)" stroke="#1b2430" stroke-width="1.75"><path d="M12 17.75l-6.172 3.245l1.179 -6.873l-5 -4.867l6.9 -1l3.086 -6.253l3.086 6.253l6.9 1l-5 4.867l1.179 6.873z"/></g>
<g transform="translate(327.7 1783) scale(1.5)" stroke="#1b2430" stroke-width="1.75"><path d="M5 4h4l2 5l-2.5 1.5a11 11 0 0 0 5 5l1.5 -2.5l5 2v4a2 2 0 0 1 -2 2a16 16 0 0 1 -15 -15a2 2 0 0 1 2 -2"/><path d="M15 7a2 2 0 0 1 2 2"/><path d="M15 3a6 6 0 0 1 6 6"/></g>
<circle cx="338.4" cy="1899.9" r="3.7" stroke="#1b2430" stroke-width="2.5" fill="none" />
<circle cx="352.8" cy="1899.9" r="3.7" stroke="#1b2430" stroke-width="2.5" fill="none" />
<circle cx="345.6" cy="1902" r="4.4" stroke="#1b2430" stroke-width="2.5" fill="none" />
<path d="M335 1919Q335 1909 345.6 1909Q356.2 1909 356.2 1919Z" stroke="#1b2430" stroke-width="2.5" fill="none" />
<path d="M333.5 1906.5Q331 1909 331.5 1915.5M357.7 1906.5Q360.2 1909 359.7 1915.5" stroke="#1b2430" stroke-width="2.5" fill="none" />
<circle cx="345.6" cy="2013.9" r="14.1" stroke="#1b2430" stroke-width="2.6" fill="none" />
<path d="M350 2008.5Q348.8 2006.2 345.8 2006.2Q341.3 2006.2 341.3 2009.8Q341.3 2013.2 345.6 2013.9Q350.2 2014.6 350.2 2018Q350.2 2021.6 345.6 2021.6Q342.3 2021.6 341 2019.3M345.6 2003V2006.2M345.6 2021.6V2025" stroke="#1b2430" stroke-width="2.6" fill="none" />
<path d="M709.5 346L720.5 357L731.5 346" stroke="#666" stroke-width="2.6" fill="none" />
<path d="M709.5 890L720.5 901L731.5 890" stroke="#666" stroke-width="2.6" fill="none" />
<path d="M707.5 1486L718 1496.5L728.5 1486" stroke="#666" stroke-width="2.6" fill="none" />
<defs><linearGradient id="fg" x1="0" y1="0" x2="1" y2="1"><stop offset="0" stop-color="#d6dce3"/><stop offset="1" stop-color="#868e98"/></linearGradient><linearGradient id="fb" x1="0" y1="0" x2="0" y2="1"><stop offset="0" stop-color="#7c8995"/><stop offset="1" stop-color="#3f4c58"/></linearGradient><clipPath id="avc"><circle cx="3889" cy="99.9" r="51"/></clipPath></defs>
<path d="M248.2 244.6L264.8 241.6L265.3 244.2L286.2 240.2L286.6 246L252.5 282.6Q248.6 282.5 248.8 279Z" stroke="none" stroke-width="0" fill="url(#fb)" />
<path d="M254.2 252.4L290.8 245.2Q291.2 247 290.6 250L287.4 273L251.2 282.4Q252.2 271 253 262Z" stroke="none" stroke-width="0" fill="url(#fg)" />
<g transform="translate(258.5 1484) rotate(45)"><path d="M-4.5 1L-10.5 10L-4 9.5Z" fill="#e8553e"/><path d="M4.5 1L10.5 10L4 9.5Z" fill="#e8553e"/><path d="M-3.5 9L0 18L3.5 9Z" fill="#f4d04a"/><path d="M0 -16C6.5 -10 6.5 4 4.5 9.5H-4.5C-6.5 4 -6.5 -10 0 -16Z" fill="#bcd0de"/><path d="M0 -16C3 -13 5 -9 5.5 -5H-5.5C-5 -9 -3 -13 0 -16Z" fill="#7fb1dc"/><circle cx="0" cy="-3.5" r="3" fill="#2e4a55" stroke="#d9443a" stroke-width="1"/></g>
<circle cx="3229.9" cy="100.3" r="10.8" stroke="#919699" stroke-width="3.8" fill="none" />
<path d="M3229.90 83.10L3229.90 77.10" stroke="#919699" stroke-width="3.9" fill="none" stroke-linecap="butt"/>
<path d="M3242.06 88.14L3246.30 83.90" stroke="#919699" stroke-width="3.9" fill="none" stroke-linecap="butt"/>
<path d="M3247.10 100.30L3253.10 100.30" stroke="#919699" stroke-width="3.9" fill="none" stroke-linecap="butt"/>
<path d="M3242.06 112.46L3246.30 116.70" stroke="#919699" stroke-width="3.9" fill="none" stroke-linecap="butt"/>
<path d="M3229.90 117.50L3229.90 123.50" stroke="#919699" stroke-width="3.9" fill="none" stroke-linecap="butt"/>
<path d="M3217.74 112.46L3213.50 116.70" stroke="#919699" stroke-width="3.9" fill="none" stroke-linecap="butt"/>
<path d="M3212.70 100.30L3206.70 100.30" stroke="#919699" stroke-width="3.9" fill="none" stroke-linecap="butt"/>
<path d="M3217.74 88.14L3213.50 83.90" stroke="#919699" stroke-width="3.9" fill="none" stroke-linecap="butt"/>
<path d="M3321 82.5C3310 81 3304.5 88 3303.8 96.5C3303.3 103 3301.5 106.5 3299 110Q3297 113 3300.5 113H3335.5Q3339 113 3337 110L3331.3 100" stroke="#1a2530" stroke-width="4.5" fill="none" stroke-linecap="butt"/>
<path d="M3311 113.5Q3313 121.5 3317.3 121.5Q3321.8 121.5 3324 113.5" stroke="#1a2530" stroke-width="4.5" fill="none" />
<circle cx="3331.1" cy="87.7" r="6.8" stroke="none" stroke-width="0" fill="#1a2530" />
<path d="M3985 93.5L3999.8 107L4014.7 93.5" stroke="#111" stroke-width="3.6" fill="none" />
<circle cx="911.5" cy="473.4" r="14.6" stroke="#1e293b" stroke-width="3.6" fill="none" />
<path d="M924.5 487L930 492" stroke="#1e293b" stroke-width="3.4" fill="none" stroke-linecap="butt"/>
<path d="M3703.7 619.7H3734L3722.1 638.8V648.7L3714.9 651.4V638.8Z" stroke="#fff" stroke-width="3.4" fill="none" />
<rect x="3826" y="619.5" width="32.2" height="32.5" rx="4.5" stroke="#fff" stroke-width="3.5"/>
<path d="M3836.6 619.5V652M3847.5 619.5V652" stroke="#fff" stroke-width="3.5" fill="none" />
<path d="M3957 642.8V615M3949.8 623.7L3957 615L3964.6 623.7M3974.3 629V656M3967 647L3974.3 656L3981.5 647" stroke="#fff" stroke-width="3.5" fill="none" />
<path d="M3854.3 2225C3846 2218 3839.7 2212.5 3839.7 2206.5C3839.7 2202.5 3842.7 2199.8 3846.4 2199.8C3849.8 2199.8 3852.5 2201.8 3854.3 2204.5C3856.1 2201.8 3858.8 2199.8 3862.3 2199.8C3866 2199.8 3869 2202.5 3869 2206.5C3869 2212.5 3862.6 2218 3854.3 2225Z" stroke="none" stroke-width="0" fill="#ff2d55" />
<g clip-path="url(#avc)"><rect x="3836" y="47" width="106" height="106" fill="#5f5756"/><rect x="3836" y="53" width="106" height="2.6" fill="#3b3535" opacity="0.85"/><rect x="3836" y="59" width="106" height="2.6" fill="#3b3535" opacity="0.85"/><rect x="3836" y="65" width="106" height="2.6" fill="#3b3535" opacity="0.85"/><rect x="3836" y="71" width="106" height="2.6" fill="#3b3535" opacity="0.85"/><rect x="3836" y="77" width="106" height="2.6" fill="#3b3535" opacity="0.85"/><rect x="3836" y="83" width="106" height="2.6" fill="#3b3535" opacity="0.85"/><rect x="3836" y="89" width="106" height="2.6" fill="#3b3535" opacity="0.85"/><rect x="3836" y="95" width="106" height="2.6" fill="#3b3535" opacity="0.85"/><rect x="3836" y="101" width="106" height="2.6" fill="#3b3535" opacity="0.85"/><rect x="3836" y="107" width="106" height="2.6" fill="#3b3535" opacity="0.85"/><rect x="3836" y="113" width="106" height="2.6" fill="#3b3535" opacity="0.85"/><rect x="3836" y="119" width="106" height="2.6" fill="#3b3535" opacity="0.85"/><rect x="3836" y="125" width="106" height="2.6" fill="#3b3535" opacity="0.85"/><rect x="3836" y="131" width="106" height="2.6" fill="#3b3535" opacity="0.85"/><rect x="3836" y="137" width="106" height="2.6" fill="#3b3535" opacity="0.85"/><rect x="3836" y="143" width="106" height="2.6" fill="#3b3535" opacity="0.85"/><rect x="3836" y="149" width="106" height="2.6" fill="#3b3535" opacity="0.85"/><path d="M3845 153C3849 133 3861 126 3877 123L3880 153Z" fill="#2f3a46"/><path d="M3933 153C3929 133 3917 126 3901 123L3898 153Z" fill="#2f3a46"/><path d="M3876 112L3876 153H3903L3903 112Z" fill="#5e3322"/><path d="M3876 134Q3889 150 3903 134L3904 153H3875Z" fill="#d9806a"/><path d="M3877 137Q3889 152 3902 137" stroke="#d8d8d8" stroke-width="1" fill="none"/><ellipse cx="3869.5" cy="93" rx="3" ry="5" fill="#6a3a27"/><ellipse cx="3908.5" cy="93" rx="3" ry="5" fill="#6a3a27"/><ellipse cx="3889" cy="94" rx="19.5" ry="25" fill="#6e3d2a"/><path d="M3867 83Q3863 62 3876 57Q3889 50 3903 57Q3913 63 3910 83Q3905 71 3889 70Q3872 71 3867 83Z" fill="#7d3f1c"/><ellipse cx="3881" cy="88" rx="3.2" ry="1.4" fill="#241612"/><ellipse cx="3897" cy="88" rx="3.2" ry="1.4" fill="#241612"/><path d="M3886 92Q3889 102 3892 92" stroke="#5a3020" stroke-width="1.5" fill="none"/><path d="M3882 104Q3889 102 3896 104Q3889 107 3882 104Z" fill="#9a5a4a"/></g>
<circle cx="3889" cy="99.9" r="51.5" stroke="#f2f2f2" stroke-width="2" fill="none" />
</svg>
<script>(function(){var w=window.innerWidth;if(w&&Math.abs(w-4096)>4){document.documentElement.style.zoom=(w/4096);}})();</script>
</body></html>
